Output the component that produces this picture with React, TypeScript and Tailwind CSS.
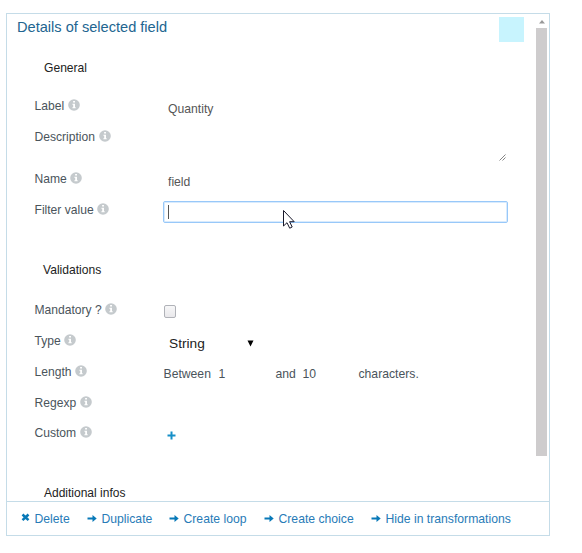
import React from 'react';

function Info() {
  return (
    <svg className="mb-[2px] ml-[3.5px] h-[12px] w-[12px] shrink-0" viewBox="0 0 12 12">
      <circle cx="6" cy="6" r="5.8" fill="#c5cacd" />
      <path d="M5.1 2h1.9v1.5H5.1zM4.4 4.7H7v3.5h.7v1.1H4.4V8.200h.8V5.800h-.8z" fill="#fff" />
    </svg>
  );
}

function Row({ label, className = 'h-[31px]', children }: { label: string; className?: string; children?: React.ReactNode }) {
  return (
    <div className={`flex shrink-0 pl-[27.5px] ${className}`}>
      <div className="flex h-[29px] w-[128.5px] shrink-0 items-center text-[12.1px] text-[#4a545b]">
        <span className="whitespace-nowrap">{label}</span>
        <Info />
      </div>
      <div className="flex min-w-0 flex-1">{children}</div>
    </div>
  );
}

function Arrow() {
  return (
    <svg className="h-[9px] w-[10px] shrink-0" viewBox="0 0 10 9">
      <path d="M.5 3.500h5V1L9.700 4.500 5.500 8V5.500h-5z" fill="#0879b8" />
    </svg>
  );
}

function Cross() {
  return (
    <svg className="mb-[2px] h-[9px] w-[9px] shrink-0" viewBox="0 0 9 9">
      <path d="M1.500 1.500l6 5.700M7.500 1.500l-6 5.700" stroke="#0879b8" strokeWidth="2.500" />
    </svg>
  );
}

function Action({ label, className, children }: { label: string; className: string; children: React.ReactNode }) {
  return (
    <button className={`flex shrink-0 items-center gap-[4.5px] whitespace-nowrap ${className}`}>
      {children}
      <span>{label}</span>
    </button>
  );
}

export default function App() {
  return (
    <div className="h-[553px] w-[582px] bg-white pl-[6px] pt-[13px] font-['Liberation_Sans',Arial,sans-serif] text-[12.2px] leading-[16px]">
      <div className="flex h-[523px] w-[544px] flex-col border border-[#c5dce8] bg-white">
        <div className="flex h-[487px] shrink-0 overflow-hidden">
          <div className="flex w-[529px] flex-col">
            <div className="flex h-[42px] shrink-0 justify-between pl-[10px] pr-[12px] pt-[3px]">
              <h1 className="text-[14.6px] leading-[20px] text-[#226590]">Details of selected field</h1>
              <div className="h-[25px] w-[25px] bg-[#c8f4fe]" />
            </div>
            <h2 className="h-[35px] shrink-0 pl-[37px] pt-[4px] text-[12.1px] text-[#222]">General</h2>
            <Row label="Label">
              <span className="pl-[5px] pt-[10px] text-[#565656]">Quantity</span>
            </Row>
            <Row label="Description" className="h-[42px]">
              <div className="flex h-[42px] w-[343px] items-end justify-end pb-[3px]">
                <svg className="h-[7px] w-[7px]" viewBox="0 0 7 7">
                  <path d="M.5 6.500l6-6M3.500 6.500l3-3" stroke="#666" strokeWidth=".8" />
                </svg>
              </div>
            </Row>
            <Row label="Name">
              <span className="pl-[5px] pt-[10px] text-[#565656]">field</span>
            </Row>
            <Row label="Filter value">
              <div className="relative mt-[6px] flex h-[22px] w-[345px] items-center rounded-[2px] border border-[#98c8f9] pl-[4px] shadow-[inset_0_0_0_1px_#d9ebfd]">
                <div className="h-[14px] w-px bg-[#555]" />
                <svg className="absolute left-[118px] top-[7px] h-[21px] w-[14px]" viewBox="0 0 14 21">
                  <path d="M1.500 1.500v15.500l3.500-3.300 2.700 5.500 2.500-1.200-2.600-5.300h4.600z" fill="#fff" stroke="#18182a" strokeWidth="1" />
                </svg>
              </div>
            </Row>
            <h2 className="mt-[36px] h-[33px] shrink-0 pl-[36px] text-[12.1px] text-[#222]">Validations</h2>
            <Row label="Mandatory ?">
              <div className="ml-[1px] mt-[10px] h-[13px] w-[12px] rounded-[2px] border border-[#b0b2b8] bg-linear-to-b from-[#f7f7f8] to-[#e9e8eb]" />
            </Row>
            <Row label="Type">
              <span className="w-[84px] pl-[6px] pt-[10px] text-[13.7px] text-[#222]">String</span>
              <svg className="mt-[14px] h-[7px] w-[7px]" viewBox="0 0 7 7">
                <path d="M.5 .5h6L3.500 6.500z" fill="#000" />
              </svg>
            </Row>
            <Row label="Length">
              <div className="flex pl-[.5px] pt-[9px] text-[#4a545b]">
                <span className="w-[55px]">Between</span>
                <span className="w-[57px]">1</span>
                <span className="w-[27px]">and</span>
                <span className="w-[56px]">10</span>
                <span>characters.</span>
              </div>
            </Row>
            <Row label="Regexp" className="h-[30px]" />
            <Row label="Custom">
              <svg className="ml-[4px] mt-[13px] h-[9px] w-[9px]" viewBox="0 0 9 9">
                <path d="M3.500 .5h2v3h3v2h-3v3h-2v-3h-3v-2h3z" fill="#168fc8" />
              </svg>
            </Row>
            <h2 className="mt-[37px] shrink-0 pl-[37px] text-[12px] leading-[14px] text-[#222]">Additional infos</h2>
          </div>
          <div className="flex w-[11px] flex-col items-center">
            <svg className="mt-[6px] h-[4px] w-[6px] shrink-0" viewBox="0 0 6 4">
              <path d="M3 0l3 3.500H0z" fill="#999" />
            </svg>
            <div className="mt-[4px] h-[428px] w-[11px] shrink-0 bg-[#cecccd]" />
          </div>
        </div>
        <div className="flex h-[34px] shrink-0 items-center border-t border-[#c5dce8] pl-[14px] text-[12.2px] text-[#287bb7]">
          <Action label="Delete" className="w-[66px]"><Cross /></Action>
          <Action label="Duplicate" className="w-[82px]"><Arrow /></Action>
          <Action label="Create loop" className="w-[95px]"><Arrow /></Action>
          <Action label="Create choice" className="w-[107px]"><Arrow /></Action>
          <Action label="Hide in transformations" className="w-[145px]"><Arrow /></Action>
        </div>
      </div>
    </div>
  );
}
